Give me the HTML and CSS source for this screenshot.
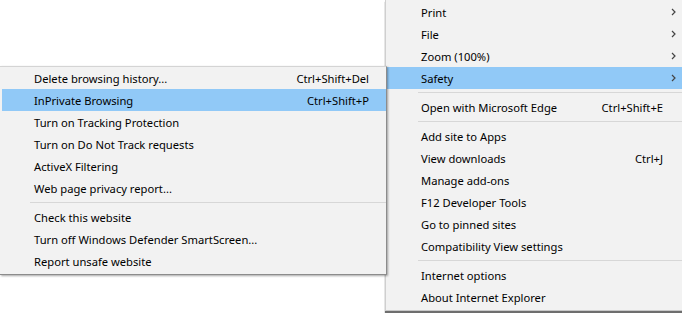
FILE: index.html
```html
<!DOCTYPE html>
<html lang="en">
<head>
  <meta charset="UTF-8" />
  <title>Tools menu</title>
  <link rel="stylesheet" href="styles.css">
</head>
<body>
  <div class="stage">

    <!-- Tools menu -->
    <ul class="menu tools-menu">
      <li class="item"><span class="label">Print</span><span class="key"></span><span class="arrow"><svg width="5" height="8" viewBox="0 0 5 8"><path d="M1 1l3 3-3 3" /></svg></span></li>
      <li class="item"><span class="label">File</span><span class="key"></span><span class="arrow"><svg width="5" height="8" viewBox="0 0 5 8"><path d="M1 1l3 3-3 3" /></svg></span></li>
      <li class="item"><span class="label">Zoom (100%)</span><span class="key"></span><span class="arrow"><svg width="5" height="8" viewBox="0 0 5 8"><path d="M1 1l3 3-3 3" /></svg></span></li>
      <li class="item active"><span class="label">Safety</span><span class="key"></span><span class="arrow"><svg width="5" height="8" viewBox="0 0 5 8"><path d="M1 1l3 3-3 3" /></svg></span></li>
      <li class="sep"></li>
      <li class="item"><span class="label">Open with Microsoft Edge</span><span class="key">Ctrl+Shift+E</span><span class="arrow"></span></li>
      <li class="sep"></li>
      <li class="item"><span class="label">Add site to Apps</span><span class="key"></span><span class="arrow"></span></li>
      <li class="item"><span class="label">View downloads</span><span class="key">Ctrl+J</span><span class="arrow"></span></li>
      <li class="item"><span class="label">Manage add-ons</span><span class="key"></span><span class="arrow"></span></li>
      <li class="item"><span class="label">F12 Developer Tools</span><span class="key"></span><span class="arrow"></span></li>
      <li class="item"><span class="label">Go to pinned sites</span><span class="key"></span><span class="arrow"></span></li>
      <li class="item"><span class="label">Compatibility View settings</span><span class="key"></span><span class="arrow"></span></li>
      <li class="sep"></li>
      <li class="item"><span class="label">Internet options</span><span class="key"></span><span class="arrow"></span></li>
      <li class="item"><span class="label">About Internet Explorer</span><span class="key"></span><span class="arrow"></span></li>
    </ul>

    <!-- Safety submenu -->
    <ul class="menu safety-menu">
      <li class="item"><span class="label">Delete browsing history...</span><span class="key">Ctrl+Shift+Del</span></li>
      <li class="item active"><span class="label">InPrivate Browsing</span><span class="key">Ctrl+Shift+P</span></li>
      <li class="item"><span class="label">Turn on Tracking Protection</span><span class="key"></span></li>
      <li class="item"><span class="label">Turn on Do Not Track requests</span><span class="key"></span></li>
      <li class="item"><span class="label">ActiveX Filtering</span><span class="key"></span></li>
      <li class="item"><span class="label">Web page privacy report...</span><span class="key"></span></li>
      <li class="sep"></li>
      <li class="item"><span class="label">Check this website</span><span class="key"></span></li>
      <li class="item"><span class="label">Turn off Windows Defender SmartScreen...</span><span class="key"></span></li>
      <li class="item"><span class="label">Report unsafe website</span><span class="key"></span></li>
    </ul>

  </div>
</body>
</html>
```

FILE: styles.css
```css
html, body {
  margin: 0;
  padding: 0;
  background: #ffffff;
  overflow: hidden;
}

.stage {
  position: relative;
  width: 682px;
  height: 313px;
  font-family: 'Noto Sans', sans-serif;
  font-size: 11.2px;
  color: #000;
}

.menu {
  list-style: none;
  margin: 0;
  background: #f2f2f2;
}

.item {
  display: flex;
  align-items: center;
  height: 22px;
  white-space: nowrap;
}

.item.active {
  background: #91c9f7;
}

.label {
  flex: 1;
}

.sep {
  height: 7px;
  display: flex;
  align-items: center;
}

.sep::after {
  content: "";
  flex: 1;
  height: 1px;
  background: #d7d7d7;
}

/* Tools menu */
.tools-menu {
  margin-left: 385px;
  width: 296px;
  padding: 1px 0 2px 1px;
  border-left: 1px solid #cfcfcf;
  border-bottom: 1px solid #c8c8c8;
  box-shadow: 0 2px 1px #6e6e6e;
}

.tools-menu .item {
  padding-left: 34px;
}

.tools-menu .sep {
  padding-left: 31px;
}

.tools-menu .arrow {
  width: 19px;
  display: flex;
  justify-content: center;
  padding-left: 1px;
}

.arrow svg path {
  fill: none;
  stroke: #444;
  stroke-width: 1.2;
}

/* Safety submenu */
.safety-menu {
  position: absolute;
  top: 66px;
  left: 0;
  width: 384px;
  padding: 0 0 2px 2px;
  border-top: 1px solid #d4d4d4;
  border-right: 1px solid #8c8c8c;
  border-bottom: 1px solid #8c8c8c;
  box-shadow: 1px 1px 2px rgba(0, 0, 0, 0.35);
}

.safety-menu .item {
  padding-left: 32px;
  padding-right: 17px;
}

.safety-menu .sep {
  padding: 0 0 0 28px;
}
```
